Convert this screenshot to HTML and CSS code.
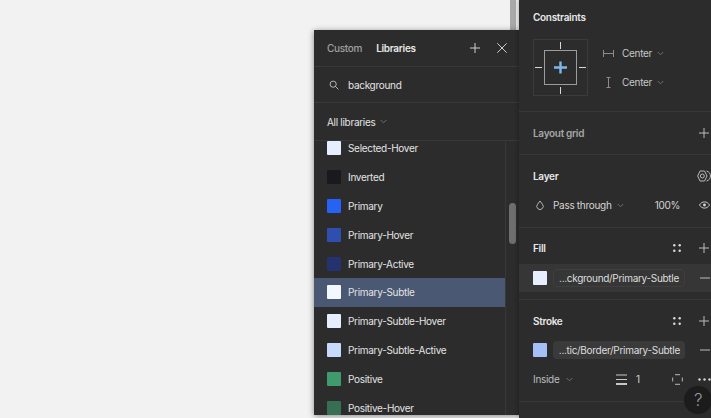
FILE: index.html
```html
<!DOCTYPE html>
<html lang="en">
<head>
<meta charset="utf-8">
<title>Fill styles</title>
<link rel="stylesheet" href="styles.css">
</head>
<body>
<div class="app">
  <main class="canvas">
    <div class="scrollstub"></div>
    <section class="picker">
      <header class="tabs">
        <span class="tab">Custom</span>
        <span class="tab tab-active">Libraries</span>
        <svg class="ic tab-plus" viewBox="0 0 10 10"><path d="M5 0v10M0 5h10"/></svg>
        <svg class="ic tab-close" viewBox="0 0 10 10"><path d="M.3.3l9.400 9.400M9.700.3L.3 9.700"/></svg>
      </header>
      <div class="search">
        <svg class="ic search-ic" viewBox="0 0 12 12"><circle cx="5" cy="5" r="3.700"/><path d="M7.700 7.700l3.600 3.600"/></svg>
        <span>background</span>
      </div>
      <div class="libs">
        <span>All libraries</span>
        <svg class="chev" viewBox="0 0 8 5"><path d="M.8.8L4 4l3.200-3.200"/></svg>
      </div>
      <div class="listwrap">
        <ul class="list">
          <li class="row row-first"><i class="sw s1"></i>Selected-Hover</li>
          <li class="row"><i class="sw s2"></i>Inverted</li>
          <li class="row"><i class="sw s3"></i>Primary</li>
          <li class="row"><i class="sw s4"></i>Primary-Hover</li>
          <li class="row"><i class="sw s5"></i>Primary-Active</li>
          <li class="row row-sel"><i class="sw s6"></i>Primary-Subtle</li>
          <li class="row"><i class="sw s1"></i>Primary-Subtle-Hover</li>
          <li class="row"><i class="sw s7"></i>Primary-Subtle-Active</li>
          <li class="row"><i class="sw s8"></i>Positive</li>
          <li class="row"><i class="sw s9"></i>Positive-Hover</li>
        </ul>
        <div class="track"><div class="thumb"></div></div>
      </div>
    </section>
  </main>
  <aside class="panel">
    <section class="sec sec-constraints">
      <h3 class="title">Constraints</h3>
      <div class="cons">
        <div class="cons-box">
          <svg viewBox="0 0 53 55" class="cons-svg">
            <rect class="b1" x="10.500" y="10.500" width="32" height="34"/>
            <path class="b2" d="M26.500 2v7M26.500 47v7M1 27.500h7M45 27.500h7"/>
            <path class="b3" d="M26.500 21.500v12M20 27.500h13"/>
          </svg>
        </div>
        <div class="cons-opts">
          <div class="opt">
            <svg class="ic opt-ic" viewBox="0 0 11 7"><path d="M.5 0v7M10.500 0v7M.5 3.500h10"/></svg>
            <span>Center</span>
            <svg class="chev" viewBox="0 0 8 5"><path d="M.8.8L4 4l3.200-3.200"/></svg>
          </div>
          <div class="opt">
            <svg class="ic opt-ic" viewBox="0 0 11 11"><path d="M3.500.5h4M3.500 10.500h4M5.500.5v10"/></svg>
            <span>Center</span>
            <svg class="chev" viewBox="0 0 8 5"><path d="M.8.8L4 4l3.200-3.200"/></svg>
          </div>
        </div>
      </div>
    </section>
    <section class="sec sec-grid">
      <div class="head"><h3 class="title title-dim">Layout grid</h3>
        <svg class="ic plus" viewBox="0 0 10 10"><path d="M5 0v10M0 5h10"/></svg></div>
    </section>
    <section class="sec sec-layer">
      <div class="head"><h3 class="title">Layer</h3>
        <svg class="ic hex" viewBox="0 0 14 12"><path d="M3 1h4.500L10 6l-2.500 5H3L.7 6z"/><circle cx="5.300" cy="6" r="2"/><path d="M9.500 1c2.200.5 4 2.500 4 5s-1.800 4.500-4 5"/></svg></div>
      <div class="layer-row">
        <svg class="ic drop" viewBox="0 0 8 11"><path d="M4 1l2.400 3.200a3.200 3.200 0 1 1-4.800 0z"/></svg>
        <span class="blend">Pass through</span>
        <svg class="chev" viewBox="0 0 8 5"><path d="M.8.8L4 4l3.200-3.200"/></svg>
        <span class="pct">100%</span>
        <svg class="ic eye" viewBox="0 0 12 8"><path d="M.5 4C2 1.700 3.800.6 6 .6s4 1.100 5.500 3.400C10 6.300 8.200 7.400 6 7.400S2 6.300.5 4z"/><circle class="fillc" cx="6" cy="4" r="1.600"/></svg>
      </div>
    </section>
    <section class="sec sec-fill">
      <div class="head"><h3 class="title">Fill</h3>
        <svg class="dots" viewBox="0 0 8 8"><circle cx="1.300" cy="1.300" r="1.200"/><circle cx="6.700" cy="1.300" r="1.200"/><circle cx="1.300" cy="6.700" r="1.200"/><circle cx="6.700" cy="6.700" r="1.200"/></svg>
        <svg class="ic plus" viewBox="0 0 10 10"><path d="M5 0v10M0 5h10"/></svg></div>
      <div class="style-row style-row-hover">
        <i class="sw s1"></i>
        <span class="pill pill-outline">...ckground/Primary-Subtle</span>
        <svg class="ic minus" viewBox="0 0 10 2"><path d="M0 1h10"/></svg>
      </div>
    </section>
    <section class="sec sec-stroke">
      <div class="head"><h3 class="title">Stroke</h3>
        <svg class="dots" viewBox="0 0 8 8"><circle cx="1.300" cy="1.300" r="1.200"/><circle cx="6.700" cy="1.300" r="1.200"/><circle cx="1.300" cy="6.700" r="1.200"/><circle cx="6.700" cy="6.700" r="1.200"/></svg>
        <svg class="ic plus" viewBox="0 0 10 10"><path d="M5 0v10M0 5h10"/></svg></div>
      <div class="style-row style-row-stroke">
        <i class="sw s10"></i>
        <span class="pill pill-solid">...tic/Border/Primary-Subtle</span>
        <svg class="ic minus" viewBox="0 0 10 2"><path d="M0 1h10"/></svg>
      </div>
      <div class="stroke-row">
        <span class="inside">Inside</span>
        <svg class="chev" viewBox="0 0 8 5"><path d="M.8.8L4 4l3.200-3.200"/></svg>
        <svg class="weight" viewBox="0 0 11 11"><path d="M0 1h11M0 5.500h11"/><path class="thick" d="M0 10h11"/></svg>
        <span class="wval">1</span>
        <svg class="ic corners" viewBox="0 0 11 11"><path d="M3 .7h5M3 10.300h5M.7 3.500v4M10.300 3.500v4"/></svg>
        <svg class="more" viewBox="0 0 13 3"><circle cx="1.500" cy="1.500" r="1.200"/><circle cx="6.500" cy="1.500" r="1.200"/><circle cx="11.500" cy="1.500" r="1.200"/></svg>
      </div>
    </section>
    <div class="help">?</div>
  </aside>
</div>
</body>
</html>
```
FILE: styles.css
```css
* { box-sizing: border-box; }
html, body { margin: 0; height: 100%; }
body { background: #f2f2f2; font-family: Inter, "Liberation Sans", sans-serif; font-size: 10px; letter-spacing: -0.3px; color: #e4e4e4; overflow: hidden; }
.app { display: flex; width: 711px; height: 418px; overflow: hidden; }
.canvas { position: relative; width: 519px; height: 418px; background: #f2f2f2; }
.scrollstub { position: absolute; left: 510px; top: 0; width: 6px; height: 30px; background: #a9a9a9; }
.picker { position: absolute; left: 314px; top: 30px; width: 206px; height: 385px; background: #2c2c2c; box-shadow: 0 1px 6px rgba(0,0,0,.45); display: flex; flex-direction: column; }
.tabs { height: 37px; display: flex; align-items: center; padding: 0 13px 0 13px; border-bottom: 1px solid #383838; flex: none; }
.tab { color: #a0a0a0; font-weight: 500; margin-right: 14px; }
.tab-active { color: #e8e8e8; font-weight: 600; }
.ic { fill: none; stroke: #cfcfcf; stroke-width: 1; flex: none; }
.tab-plus { width: 10px; height: 10px; margin-left: auto; }
.tab-close { width: 10px; height: 10px; margin-left: 17px; }
.search { height: 36px; display: flex; align-items: center; padding-left: 15px; gap: 9px; border-bottom: 1px solid #383838; flex: none; }
.search-ic { width: 10px; height: 10px; }
.libs { height: 38px; display: flex; align-items: center; padding-left: 13px; gap: 5px; flex: none; border-bottom: 1px solid #383838; }
.chev { width: 7px; height: 5px; fill: none; stroke: #777; stroke-width: 1; flex: none; }
.listwrap { flex: 1; display: flex; overflow: hidden; min-height: 0; }
.list { flex: 1; list-style: none; margin: 0; padding: 0; overflow: hidden; min-width: 0; }
.row { height: 28.900px; display: flex; align-items: center; padding-left: 13px; gap: 7px; }
.row-first { margin-top: -7.500px; }
.row-sel { background: #4b5873; }
.sw { width: 14px; height: 14px; border-radius: 1px; flex: none; display: block; }
.s1 { background: #e6effe; }
.s2 { background: #1a1a1e; }
.s3 { background: #2562f5; }
.s4 { background: #2f4fb0; }
.s5 { background: #24326f; }
.s6 { background: #f3f7ff; }
.s7 { background: #c7dafb; }
.s8 { background: #3f9a6d; }
.s9 { background: #376f55; }
.s10 { background: #a4c1f7; }
.track { width: 15px; flex: none; border-left: 1px solid #383838; position: relative; }
.thumb { position: absolute; left: 3px; top: 62px; width: 7px; height: 41px; border-radius: 4px; background: #6e6e6e; }
.panel { position: relative; width: 192px; height: 418px; background: #2c2c2c; flex: none; box-shadow: -2px 0 3px rgba(0,0,0,.18); }
.sec { border-bottom: 1px solid #383838; padding: 0 0 0 14px; }
.title { margin: 0; font-size: 10px; font-weight: 600; color: #e8e8e8; line-height: 12px; }
.title-dim { color: #a6a6a6; }
.head { display: flex; align-items: center; height: 12px; }
.head .title { flex: 1; }
.sec-constraints { height: 112px; padding-top: 11px; }
.cons { display: flex; align-items: center; margin-top: 16px; }
.cons-box { width: 55px; height: 57px; border: 1px solid #3b3b3b; flex: none; }
.cons-svg { width: 53px; height: 55px; display: block; }
.b1 { fill: none; stroke: #9c9c9c; stroke-width: 1; }
.b2 { fill: none; stroke: #d8d8d8; stroke-width: 1; }
.b3 { fill: none; stroke: #7cb7ea; stroke-width: 2.400; }
.cons-opts { margin-left: 15px; display: flex; flex-direction: column; gap: 14px; }
.opt { display: flex; align-items: center; height: 15px; color: #c8c8c8; }
.opt-ic { width: 11px; height: 11px; margin-right: 8px; stroke: #8c8c8c; }
.opt .chev { margin-left: 5px; }
.sec-grid { height: 43px; padding-top: 15px; }
.plus { width: 10px; height: 10px; margin-right: 2px; stroke: #bbb; }
.sec-layer { height: 73px; padding-top: 15px; }
.hex { width: 14px; height: 12px; stroke: #bbb; }
.layer-row { display: flex; align-items: center; margin-top: 16px; height: 14px; }
.drop { width: 8px; height: 11px; margin-left: 3px; stroke: #b5b5b5; }
.blend { margin-left: 9px; color: #d4d4d4; }
.layer-row .chev { margin-left: 5px; }
.pct { margin-left: auto; margin-right: 19px; color: #d4d4d4; }
.eye { width: 11px; height: 8px; margin-right: 1px; stroke: #d4d4d4; }
.fillc { fill: #d4d4d4; stroke: none; }
.sec-fill { height: 72px; padding-top: 14px; padding-left: 0; }
.sec-fill .head, .sec-stroke .head { padding-left: 14px; }
.dots { width: 8px; height: 8px; fill: #dcdcdc; margin-right: 18px; flex: none; }
.style-row { display: flex; align-items: center; height: 28px; padding-left: 14px; gap: 6px; }
.style-row-hover { background: #363636; margin-top: 10px; }
.style-row-stroke { margin-top: 9px; }
.minus { margin-left: 9px; width: 10px; height: 2px; stroke: #bbb; }
.pill { width: 132px; height: 18px; border-radius: 4px; display: flex; align-items: center; justify-content: flex-end; padding-right: 5px; color: #dedede; white-space: nowrap; }
.pill-outline { border: 1px solid #3f3f3f; }
.pill-solid { background: #3a3a3a; }
.sec-stroke { height: 102px; padding: 15px 0 0 0; }
.stroke-row { display: flex; align-items: center; height: 14px; padding-left: 14px; margin-top: 8px; }
.inside { color: #bdbdbd; width: 28px; }
.stroke-row .chev { margin-left: 5px; }
.weight { width: 11px; height: 11px; margin-left: 43px; fill: none; stroke: #c8c8c8; stroke-width: 1; flex: none; }
.thick { stroke-width: 2; }
.wval { margin-left: 9px; color: #d4d4d4; width: 6px; }
.corners { width: 11px; height: 11px; margin-left: 30px; stroke: #b8b8b8; }
.more { width: 13px; height: 3px; margin-left: 15px; fill: #d8d8d8; flex: none; }
.help { position: absolute; left: 165px; top: 386px; width: 28px; height: 28px; border-radius: 50%; background: #1c1c1c; color: #9a9a9a; font-size: 17px; display: flex; align-items: center; justify-content: center; font-weight: 300; }
```
